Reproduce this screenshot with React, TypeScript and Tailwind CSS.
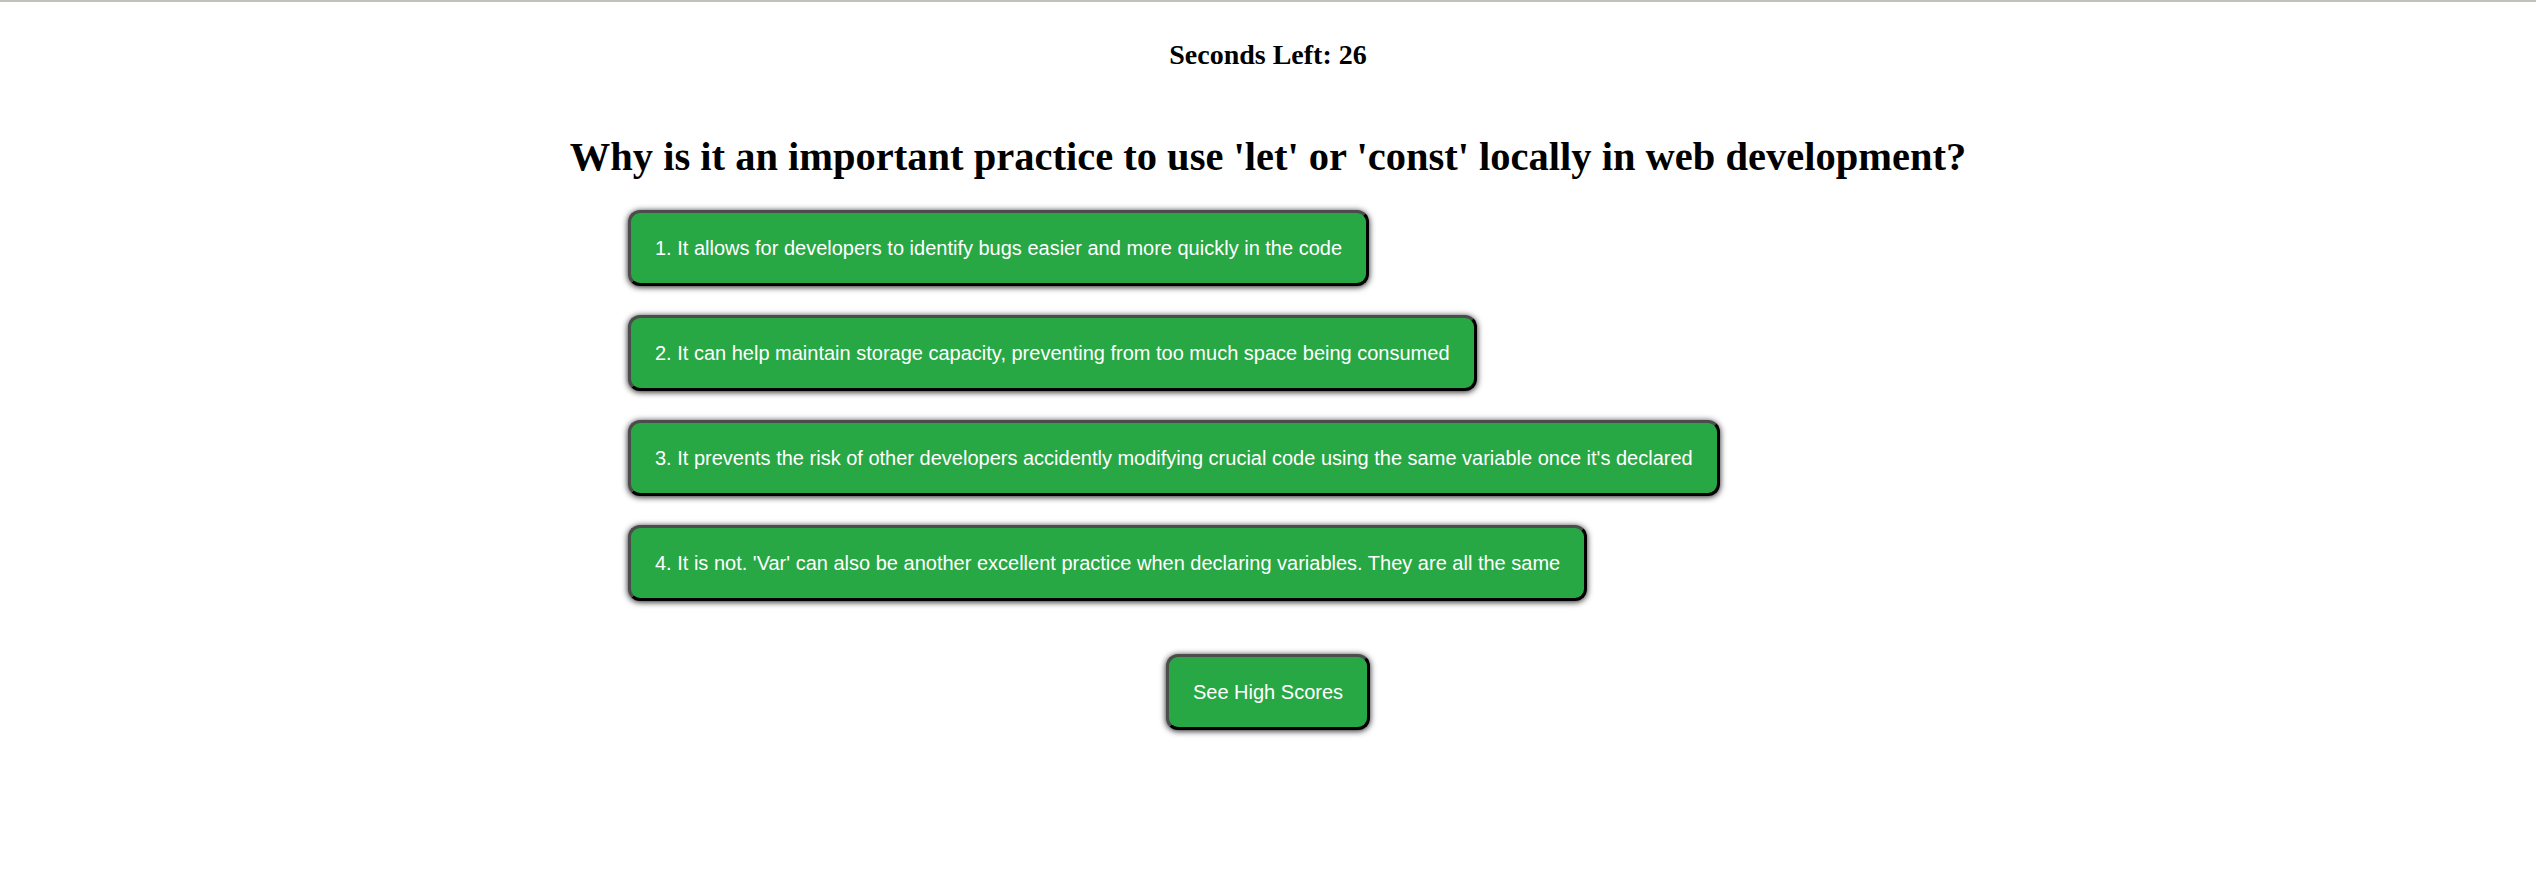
const answers = [
  "1. It allows for developers to identify bugs easier and more quickly in the code",
  "2. It can help maintain storage capacity, preventing from too much space being consumed",
  "3. It prevents the risk of other developers accidently modifying crucial code using the same variable once it's declared",
  "4. It is not. 'Var' can also be another excellent practice when declaring variables. They are all the same",
];

function QuizButton({ label }: { label: string }) {
  return (
    <button className="rounded-[12px] border-[3px] border-t-[#4c4c4c] border-l-[#4c4c4c] border-b-black border-r-black bg-[#28a745] px-6 py-[24px] text-[20px] leading-[22px] text-white shadow-[0_1px_6px_rgba(0,0,0,0.9)] font-['Liberation_Sans',Arial,sans-serif]">
      {label}
    </button>
  );
}

export default function App() {
  const seconds = 26;

  return (
    <div className="min-h-screen bg-white border-t-2 border-[#c4c1bc] font-['Liberation_Serif','Times_New_Roman',serif] text-black">
      <h3 className="pt-[39px] text-center text-[28px] leading-[28px] font-bold">
        Seconds Left: {seconds}
      </h3>
      <h1 className="mt-[65px] text-center text-[40.5px] leading-[46px] font-bold">
        Why is it an important practice to use 'let' or 'const' locally in web development?
      </h1>
      <div className="mt-[30px] ml-[628px] flex flex-col items-start gap-[29px]">
        {answers.map((a) => (
          <QuizButton key={a} label={a} />
        ))}
      </div>
      <div className="mt-[53px] flex justify-center">
        <QuizButton label="See High Scores" />
      </div>
    </div>
  );
}
